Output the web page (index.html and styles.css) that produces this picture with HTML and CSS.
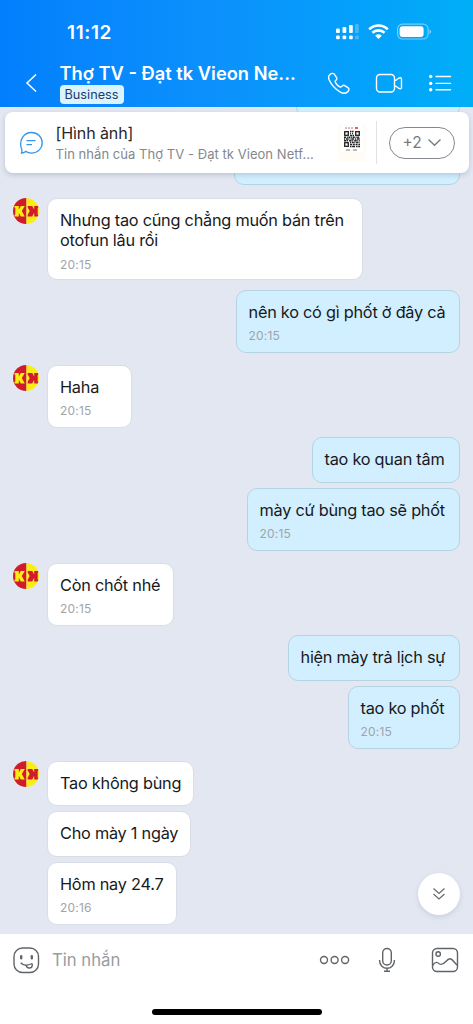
FILE: index.html
```html
<!DOCTYPE html>
<html lang="vi">
<head>
<meta charset="utf-8">
<meta name="viewport" content="width=device-width, initial-scale=1">
<title>Thợ TV</title>
<link rel="stylesheet" href="styles.css">
</head>
<body>
<svg class="defs" width="0" height="0" aria-hidden="true">
  <defs>
    <clipPath id="disc"><circle cx="13" cy="13" r="13"/></clipPath>
    <g id="logo" clip-path="url(#disc)">
      <rect width="13.5" height="26" fill="#d01c2a"/>
      <rect x="13.5" width="12.500" height="26" fill="#fbed12"/>
      <path d="M1.500 8h4.300v3.500l2-3.500h4l-3 5 3 5.500h-4l-2-3.700v3.700H1.500v-1.700h.8v-7h-.8z" fill="#fbed12"/>
      <path d="M25.500 8h-4.300v3.500l-2-3.500h-4.500v1.500l2 3.500-2 3.800v1.700h4.500l2-3.700v3.700h4.300v-1.700h-.8v-7h.8z" fill="#d01c2a"/>
    </g>
  </defs>
</svg>
<div class="screen">
  <header class="header">
    <div class="status">
      <span class="clock">11:12</span>
      <svg class="status-icons" width="98" height="20" viewBox="0 0 98 20">
        <rect x="1" y="6.500" width="3.800" height="4.500" rx="1"/><rect x="7.500" y="5" width="3.800" height="6" rx="1"/><rect x="14" y="3" width="3.800" height="8" rx="1"/><rect x="20" y="2" width="3.800" height="9" rx="1" opacity=".25"/>
        <rect x="1" y="13.500" width="3.800" height="3.800" rx="1.200"/><rect x="7.500" y="13.500" width="3.800" height="3.800" rx="1.200"/><rect x="14" y="13.500" width="3.800" height="3.800" rx="1.200"/><rect x="20" y="13.500" width="3.800" height="3.800" rx="1.200" opacity=".25"/>
        <g fill="none" stroke="#fff" stroke-width="2.600"><path d="M34.200 7.200c5.500-5 13-5 18.600 0"/><path d="M37.400 10.800c3.600-3.200 8.600-3.200 12.200 0"/></g>
        <path d="M40.200 13.700c2-1.800 4.600-1.800 6.600 0L43.500 17z"/>
        <rect x="62.600" y="2.200" width="30.500" height="14.800" rx="4.800" fill="none" stroke="#fff" stroke-width="1.200" opacity=".45"/>
        <rect x="64.600" y="4.200" width="24" height="10.800" rx="3"/><path d="M94.500 7.500c2.200.8 2.200 3.600 0 4.400z" opacity=".5"/>
      </svg>
    </div>
    <div class="nav">
      <svg class="back" width="14" height="20" viewBox="0 0 14 20"><path d="M11 1.500L2 10l9 8.500"/></svg>
      <div class="who"><h1>Thợ TV - Đạt tk Vieon Ne...</h1><span class="tag">Business</span></div>
      <svg class="actions" width="126" height="24" viewBox="0 0 126 24">
        <path d="M3 3.500c1.800-1.600 3.800-1.400 4.700.2l2 3.100c.8 1.400-.8 2.400-1.500 3.300-.5 1.600 3.700 6.100 5.600 5.900 1.200-.5 2.100-2.200 3.500-1.600l3.600 2.300c1.400.9 1.500 2 .3 3.500-2.300 3-5.200 2.400-8.300.6C8.300 18.100 4.200 13.500 2.100 8.800 1.300 6.800 1.400 4.800 3 3.500z"/>
        <rect x="49.500" y="3.500" width="18" height="17.500" rx="3.500"/><path d="M67.500 9.500c3.500 0 2.500-2.700 5.800-2.700.9 0 1.200.5 1.200 1.200v8.500c0 .7-.3 1.200-1.200 1.200-3.300 0-2.300-2.700-5.800-2.700"/>
        <path d="M109 5.500h14.500M109 12.400h14.500M109 18.700h14.500" stroke-linecap="round"/>
        <g class="dots"><circle cx="103.700" cy="5.500" r="1.700"/><circle cx="103.700" cy="12.400" r="1.700"/><circle cx="103.700" cy="18.700" r="1.700"/></g>
      </svg>
    </div>
  </header>

  <main class="chat">
    <section class="pinned">
      <svg class="pin-icon" width="24" height="24" viewBox="0 0 24 24"><path d="M1.500 22c.7-1.700.7-3-.2-5C-1 9.500 3.500 1.500 11.500 1.500c6 0 10.700 4.500 10.700 10.300s-4.700 10.300-10.700 10.300c-2.300 0-4.200-.6-5.800-1.700C4.500 21.500 3 22 1.500 22z"/><path d="M6.500 9.700h9M6.500 13.700h5.500"/></svg>
      <div class="pin-text"><p class="pin-title">[Hình ảnh]</p><p class="pin-sub">Tin nhắn của Thợ TV - Đạt tk Vieon Netf...</p></div>
      <div class="thumb">
        <svg width="22" height="26" viewBox="0 0 22 26"><rect width="22" height="26" fill="#fff"/><path d="M4 2h9" stroke="#b77" stroke-dasharray="2 1"/><path d="M14 2h3" stroke="#e22" stroke-width="1.500"/><path d="M5 24h4m3 0h4" stroke="#777"/>
          <g fill="none" stroke="#222" stroke-width="1.300"><rect x="3.700" y="5.700" width="3.600" height="3.600"/><rect x="14.700" y="5.700" width="3.600" height="3.600"/><rect x="3.700" y="16.700" width="3.600" height="3.600"/></g>
          <g stroke="#222" stroke-width="1.400"><path d="M9 5.500h4" stroke-dasharray="1.500 .6"/><path d="M9 7.500h4" stroke-dasharray="1 1"/><path d="M9 9.500h4" stroke-dasharray="2 .5"/><path d="M3 11.300h16" stroke-dasharray="2 .8 1 .6"/><path d="M3 13h16" stroke-dasharray="1 .7 3 .8"/><path d="M3 14.700h16" stroke-dasharray="2.500 .6 1 1"/><path d="M9 16.500h10" stroke-dasharray="1 .8 2 .5"/><path d="M9 18.500h10" stroke-dasharray="2 .8"/><path d="M9 20.500h10" stroke-dasharray="1.500 .6 3 1"/></g></svg>
      </div>
      <span class="rule"></span>
      <button class="more">+2 <svg width="15" height="9" viewBox="0 0 15 9"><path d="M1.500 1.500l6 5.700 6-5.700"/></svg></button>
    </section>

    <div class="group out first">
      <div class="bubble w163"></div>
      <div class="bubble w226"><p>&nbsp;</p><time>20:15</time></div>
    </div>
    <div class="group in g13"><svg class="avatar" viewBox="0 0 26 26"><use href="#logo"/></svg>
      <div class="stack"><div class="bubble w316 two"><p>Nhưng tao cũng chẳng muốn bán trên<br>otofun lâu rồi</p><time>20:15</time></div></div></div>
    <div class="group out"><div class="bubble w224"><p>nên ko có gì phốt ở đây cả</p><time>20:15</time></div></div>
    <div class="group in g12"><svg class="avatar" viewBox="0 0 26 26"><use href="#logo"/></svg>
      <div class="stack"><div class="bubble w85"><p>Haha</p><time>20:15</time></div></div></div>
    <div class="group out"><div class="bubble w148"><p>tao ko quan tâm</p></div><div class="bubble w213"><p>mày cứ bùng tao sẽ phốt</p><time>20:15</time></div></div>
    <div class="group in g12"><svg class="avatar" viewBox="0 0 26 26"><use href="#logo"/></svg>
      <div class="stack"><div class="bubble w127"><p>Còn chốt nhé</p><time>20:15</time></div></div></div>
    <div class="group out"><div class="bubble w172"><p>hiện mày trả lịch sự</p></div><div class="bubble w112"><p>tao ko phốt</p><time>20:15</time></div></div>
    <div class="group in g12"><svg class="avatar" viewBox="0 0 26 26"><use href="#logo"/></svg>
      <div class="stack"><div class="bubble w147"><p>Tao không bùng</p></div><div class="bubble w144"><p>Cho mày 1 ngày</p></div><div class="bubble w130"><p>Hôm nay 24.7</p><time>20:16</time></div></div></div>
    <div class="group out next"><div class="bubble w137"></div></div>

    <button class="jump"><svg width="14" height="14" viewBox="0 0 14 14"><path d="M1.500 1.500L7 6.500l5.500-5M1.500 7L7 12l5.500-5"/></svg></button>
  </main>

  <footer class="footer">
    <div class="composer">
      <svg width="28" height="28" viewBox="0 0 28 28"><rect x="2" y="2" width="24.500" height="24.500" rx="8.500"/><path d="M9.200 10.200v2M19.800 10.200v2" stroke-width="2.400" stroke-linecap="round"/><path d="M8.700 16.800c3 3.300 7 3 11.500.7"/><path d="M14.200 19.300c.3 3.600 5.800 3.600 6 .2v-2"/></svg>
      <span class="placeholder">Tin nhắn</span>
      <svg class="dots3" width="32" height="12" viewBox="0 0 32 12"><circle cx="5" cy="6" r="3.500"/><circle cx="15.600" cy="6" r="3.500"/><circle cx="26.100" cy="6" r="3.500"/></svg>
      <svg class="mic" width="18" height="26" viewBox="0 0 18 26"><rect x="4.700" y="1.500" width="8.600" height="16.500" rx="4.300"/><path d="M1.500 13c0 11 15 11 15 0M9 21.300v3M6 24.300h6"/></svg>
      <svg class="pic" width="28" height="26" viewBox="0 0 28 26"><rect x="1.500" y="1.500" width="25" height="23" rx="4.500"/><circle cx="7.200" cy="7" r="2.200"/><path d="M1.500 18.500c3-4.500 5-3.300 7-1.500 4.500 2.500 6.500-5 10.500-5.200 2.700-.1 4.800 5.200 7.500 6.400"/></svg>
    </div>
    <div class="home"></div>
  </footer>
</div>
</body>
</html>
```

FILE: styles.css
```css
* { box-sizing: border-box; }
body { margin: 0; font-family: Inter, "Noto Sans", sans-serif; color: #17191c; }
h1, p { margin: 0; font-weight: 400; }
button { font: inherit; padding: 0; }
svg { display: block; flex: none; fill: none; }
.defs { position: absolute; }
.screen { width: 473px; height: 1024px; display: flex; flex-direction: column; overflow: hidden; }

.header { height: 107px; flex: none; color: #fff; background: linear-gradient(90deg, #037ffd 0%, #0c91fc 45%, #04a0fb 75%, #00aef7 100%); }
.status { height: 60px; padding: 22px 40px 0 67px; display: flex; justify-content: space-between; }
.status-icons { fill: #fff; }
.clock { font-size: 19px; line-height: 21px; font-weight: 600; letter-spacing: .6px; }
.nav { display: flex; padding-left: 25px; }
.back { margin-top: 13px; stroke: #fff; stroke-width: 1.500; }
.who { width: 262px; padding-left: 20.500px; display: flex; flex-direction: column; align-items: flex-start; }
.who h1 { font-size: 18.300px; line-height: 26px; font-weight: 600; white-space: nowrap; }
.tag { width: 64px; height: 19px; margin-top: -1px; border-radius: 4px; background: #daf3fd; color: #1c3b70; font-size: 12.700px; line-height: 19px; text-align: center; }
.actions { margin: 11px 0 0 26px; stroke: #fff; stroke-width: 1.400; }
.dots { fill: #fff; stroke: none; }

.chat { position: relative; height: 827px; flex: none; overflow: hidden; background: #e2e7f2; display: flex; flex-direction: column; }
.pinned { position: absolute; z-index: 2; left: 5px; top: 5px; width: 464px; height: 61px; padding-left: 15px; border-radius: 8px; background: #fff; box-shadow: 0 2px 5px rgba(60, 80, 110, .22); display: flex; align-items: center; }
.pin-icon { stroke: #3596e9; stroke-width: 1.300; }
.pin-text { width: 283px; padding-left: 11.500px; white-space: nowrap; }
.pin-title { font-size: 16px; line-height: 22px; color: #26282c; letter-spacing: -.1px; }
.pin-sub { font-size: 13px; line-height: 20px; color: #84888e; letter-spacing: .05px; }
.thumb { width: 28px; height: 36px; margin-left: 11px; padding: 1px 3px; background: #fffcf6; }
.rule { width: 1px; height: 43px; margin-left: 10px; background: #dfe2e6; }
.more { width: 66px; height: 32px; margin-left: 12px; border: 1px solid #85898f; border-radius: 16px; background: #fff; color: #777b81; font-size: 15.500px; display: flex; align-items: center; justify-content: center; gap: 5px; }
.more svg { stroke: #777b81; stroke-width: 1.400; }

.group { display: flex; flex: none; }
.out { flex-direction: column; align-items: flex-end; gap: 5px; padding-right: 13.500px; margin-top: 9.500px; }
.first { margin-top: -35.500px; }
.in { padding-left: 13px; gap: 8px; align-items: flex-start; }
.g13 { margin-top: 13px; }
.g12 { margin-top: 12px; }
.stack { display: flex; flex-direction: column; align-items: flex-start; gap: 5px; }
.avatar { width: 26px; height: 26px; }
.bubble { min-height: 45.500px; padding: 11px 12px 0; border: 1px solid #d9dde5; border-radius: 10px; background: #fff; font-size: 16.300px; line-height: 20px; letter-spacing: -.24px; white-space: nowrap; }
.out .bubble { background: #d1effe; border-color: #b5d4e2; }
.bubble:has(time) { height: 63px; }
.bubble.two { height: 82px; }
.bubble time { display: block; margin-top: 7.500px; font-size: 12px; line-height: 14px; color: #a0a4a8; letter-spacing: .2px; }
.next { margin-top: 9px; }
.w85 { width: 85px; } .w112 { width: 112px; } .w127 { width: 127px; } .w130 { width: 130px; }
.w137 { width: 137px; } .w144 { width: 144px; } .w147 { width: 147px; } .w148 { width: 148px; }
.w163 { width: 164px; } .w172 { width: 172px; } .w213 { width: 213px; } .w224 { width: 224px; }
.w226 { width: 226px; } .w316 { width: 316px; }
.jump { position: absolute; right: 13px; bottom: 19px; width: 42px; height: 42px; border: 0; border-radius: 50%; background: #fff; box-shadow: 0 2px 5px rgba(60, 80, 110, .15); display: flex; align-items: center; justify-content: center; }
.jump svg { stroke: #666a70; stroke-width: 1.200; }

.footer { flex: 1; background: #fff; }
.composer { height: 52px; padding-left: 12px; display: flex; align-items: center; stroke: #606469; stroke-width: 1.400; }
.placeholder { width: 279px; padding-left: 12px; font-size: 16.700px; color: #979ca1; }
.mic { margin-left: 27px; }
.pic { margin-left: 35px; }
.home { width: 170px; height: 6px; margin: 23px 0 0 152px; border-radius: 3px; background: #000; }
```
